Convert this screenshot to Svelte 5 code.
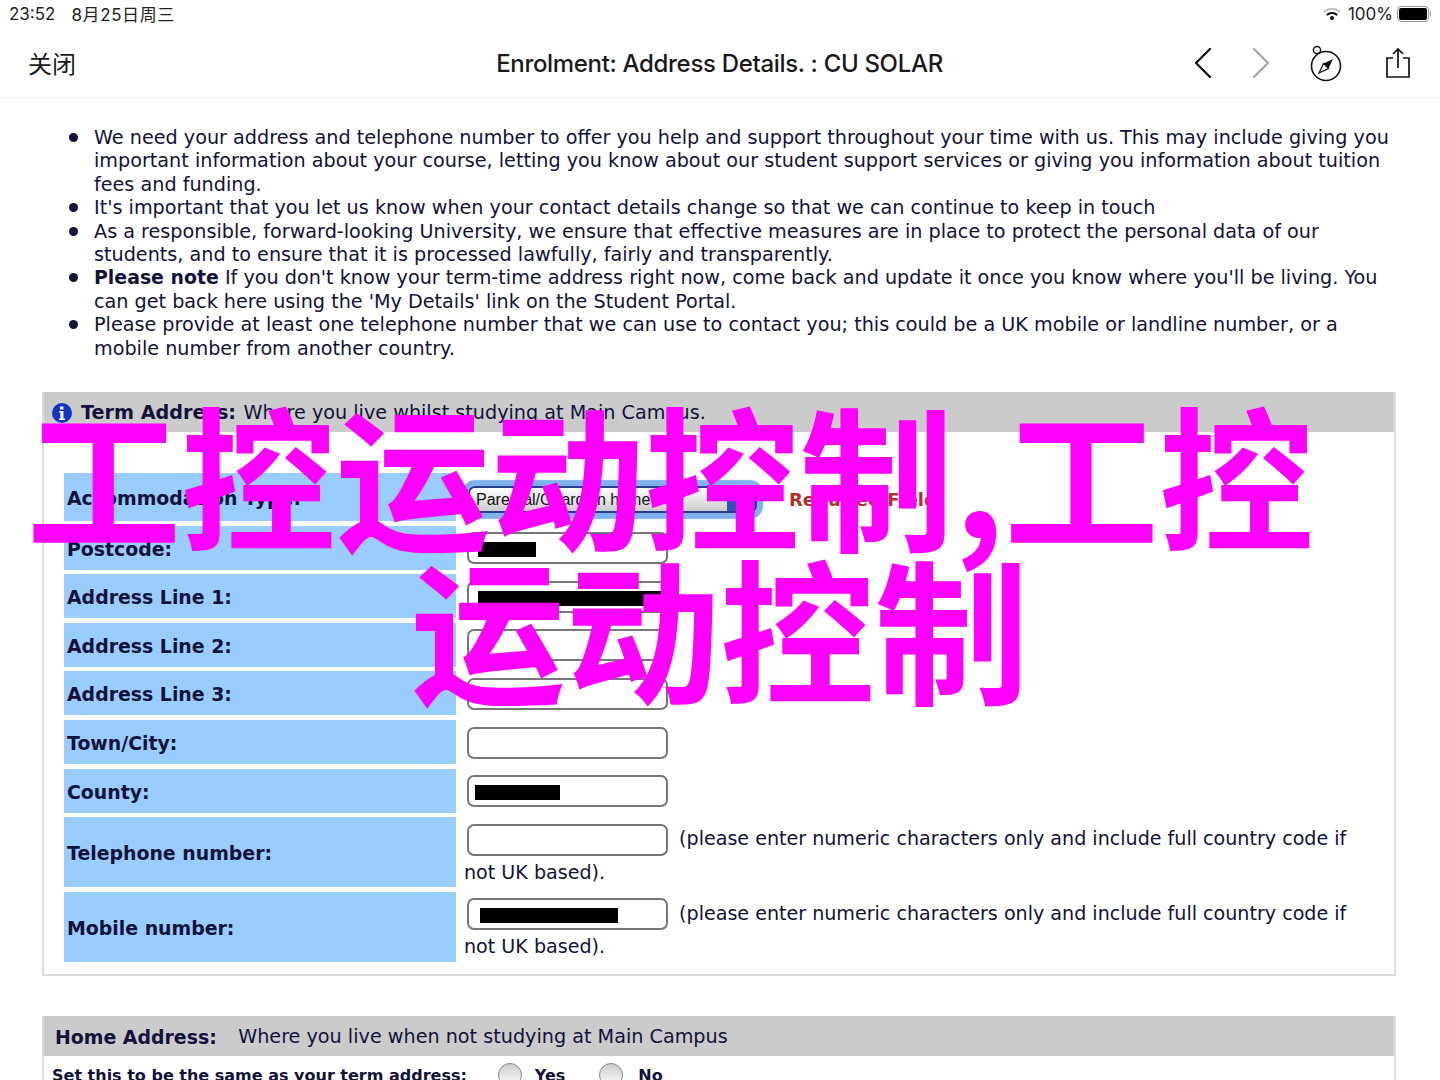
<script>
  const rows = [
    { label: 'Postcode:', mask: { left: 9, width: 58 } },
    { label: 'Address Line 1:', mask: { left: 9, width: 184 } },
    { label: 'Address Line 2:' },
    { label: 'Address Line 3:' },
    { label: 'Town/City:' },
    { label: 'County:', mask: { left: 6, width: 85 } }
  ];
  const notes = [
    { label: 'Telephone number:' },
    { label: 'Mobile number:', mask: { left: 11, width: 138 } }
  ];
</script>

<div class="screen">
  <header class="status">
    <span class="clock">23:52</span>
    <span class="date">8月25日周三</span>
    <span class="status-right">
      <svg class="wifi" width="20" height="14" viewBox="0 0 20 14">
        <path d="M2 5.2a11.5 11.5 0 0 1 16 0" fill="none" stroke="#bbb" stroke-width="1.8" />
        <path d="M4.8 8a7.5 7.5 0 0 1 10.4 0" fill="none" stroke="#111" stroke-width="2" />
        <circle cx="10" cy="11" r="2" fill="#111" />
      </svg>
      <span>100%</span>
      <span class="battery"><span class="battery-fill"></span></span>
      <span class="battery-cap"></span>
    </span>
  </header>

  <nav class="nav">
    <span class="close">关闭</span>
    <span class="title">Enrolment: Address Details. : CU SOLAR</span>
    <span class="tools">
      <svg width="20" height="32" viewBox="0 0 20 32">
        <path d="M17 2 3 16l14 14" fill="none" stroke="#111" stroke-width="2.4" stroke-linecap="round" stroke-linejoin="round" />
      </svg>
      <svg class="next" width="20" height="32" viewBox="0 0 20 32">
        <path d="M3 2l14 14L3 30" fill="none" stroke="#aaa" stroke-width="2.4" stroke-linecap="round" stroke-linejoin="round" />
      </svg>
      <svg class="compass" width="34" height="38" viewBox="0 0 34 38">
        <circle cx="18" cy="22" r="14.5" fill="none" stroke="#111" stroke-width="1.6" />
        <circle cx="9" cy="6" r="3.6" fill="none" stroke="#111" stroke-width="1.5" />
        <path d="M25 15 20.5 24.5 15.5 19.5z" fill="#111" />
        <path d="M11 29l4.500-9.500 5 5z" fill="none" stroke="#111" stroke-width="1.2" />
      </svg>
      <svg class="share" width="26" height="32" viewBox="0 0 26 32">
        <path d="M8 11H2v19h22V11h-6" fill="none" stroke="#111" stroke-width="1.7" />
        <path d="M13 21V2M8 7l5-5 5 5" fill="none" stroke="#111" stroke-width="1.7" />
      </svg>
    </span>
  </nav>

  <main class="page">
    <ul class="notes">
      <li>We need your address and telephone number to offer you help and support throughout your time with us. This may include giving you important information about your course, letting you know about our student support services or giving you information about tuition fees and funding.</li>
      <li>It's important that you let us know when your contact details change so that we can continue to keep in touch</li>
      <li>As a responsible, forward-looking University, we ensure that effective measures are in place to protect the personal data of our students, and to ensure that it is processed lawfully, fairly and transparently.</li>
      <li><b>Please note</b> If you don't know your term-time address right now, come back and update it once you know where you'll be living. You can get back here using the 'My Details' link on the Student Portal.</li>
      <li>Please provide at least one telephone number that we can use to contact you; this could be a UK mobile or landline number, or a mobile number from another country.</li>
    </ul>

    <section class="panel term">
      <div class="panel-head">
        <svg class="info" width="20" height="20" viewBox="0 0 20 20">
          <circle cx="10" cy="10" r="10" fill="#1533c8" />
          <path d="M8 3.500h3.400v3H8zM7 8h4.400v7.400H13V17H7v-1.600h1.400V9.600H7z" fill="#fff" />
        </svg>
        <b>Term Address:</b> Where you live whilst studying at Main Campus.
      </div>

      <div class="rows">
        <div class="row first">
          <div class="label">Accommodation Type:</div>
          <div class="value select-cell">
            <span class="select">Parental/Guardian home<span class="select-btn"></span></span>
            <span class="required">Required Field</span>
          </div>
        </div>
        {#each rows as row}
          <div class="row">
            <div class="label">{row.label}</div>
            <div class="value">
              <span class="field">
                {#if row.mask}<span class="mask" style="margin-left: {row.mask.left}px; width: {row.mask.width}px"></span>{/if}
              </span>
            </div>
          </div>
        {/each}
        {#each notes as row}
          <div class="row tall">
            <div class="label">{row.label}</div>
            <div class="value">
              <span class="field">
                {#if row.mask}<span class="mask" style="margin-left: {row.mask.left}px; width: {row.mask.width}px"></span>{/if}
              </span>
              (please enter numeric characters only and include full country code if not UK based).
            </div>
          </div>
        {/each}
      </div>
    </section>

    <section class="panel home">
      <div class="panel-head home-head">
        <b>Home Address:</b>
        <span>Where you live when not studying at Main Campus</span>
      </div>
      <div class="same">
        <b>Set this to be the same as your term address:</b>
        <span class="radio"></span><b>Yes</b>
        <span class="radio no"></span><b>No</b>
      </div>
    </section>
  </main>

  <div class="stamp">
    <span class="stamp-one">工控运动控制,工控</span>
    <span class="stamp-two">运动控制</span>
  </div>
</div>

<style>
  :global(body) {
    margin: 0;
    background: #fff;
  }

  .screen {
    position: relative;
    width: 1440px;
    height: 1080px;
    overflow: hidden;
    background: #fff;
    color: #12123a;
    font-family: "DejaVu Sans", sans-serif;
  }

  .status {
    display: flex;
    align-items: center;
    box-sizing: border-box;
    height: 26px;
    padding: 1px 9px 0 9px;
    font-family: Inter, "Noto Sans CJK SC", sans-serif;
    font-size: 17px;
    color: #222;
  }

  .date {
    margin-left: 16px;
    letter-spacing: 0.6px;
  }

  .status-right {
    display: flex;
    align-items: center;
    margin-left: auto;
    font-size: 17px;
  }

  .wifi {
    margin-right: 6px;
  }

  .battery {
    display: flex;
    width: 28px;
    height: 12px;
    margin-left: 4px;
    padding: 1px;
    border: 1px solid #999;
    border-radius: 4px;
  }

  .battery-fill {
    flex: 1;
    background: #000;
    border-radius: 2px;
  }

  .battery-cap {
    width: 1px;
    height: 5px;
    margin-left: 1px;
    background: #999;
  }

  .nav {
    display: grid;
    grid-template-columns: 1fr auto 1fr;
    align-items: center;
    height: 72px;
    padding: 2px 29px 0 28px;
    border-bottom: 1px solid #f0f0f0;
    box-sizing: border-box;
    color: #1a1a1a;
  }

  .close {
    font-family: "Noto Sans CJK SC", sans-serif;
    font-size: 24px;
  }

  .title {
    margin-top: 1px;
    font-family: Inter, sans-serif;
    font-size: 24px;
    font-weight: 500;
    letter-spacing: -0.32px;
    white-space: nowrap;
  }

  .tools {
    display: flex;
    align-items: center;
    justify-self: end;
  }

  .next {
    margin-left: 38px;
  }

  .compass {
    margin-left: 37px;
  }

  .share {
    margin-left: 43px;
  }

  .page {
    padding: 28px 44px 0 42px;
    font-size: 19.2px;
  }

  .notes {
    margin: 0 0 32px;
    padding: 0 0 0 52px;
    font-size: 19.2px;
    line-height: 23.4px;
    list-style: none;
  }

  .notes li {
    position: relative;
  }

  .notes li::before {
    content: "";
    position: absolute;
    top: 7px;
    left: -25px;
    width: 9px;
    height: 9px;
    border-radius: 50%;
    background: #12123a;
  }

  .notes b {
    font-size: 18.9px;
  }

  .panel {
    box-sizing: border-box;
    border: 1px solid #dcdcdc;
    border-top: 0;
  }

  .term {
    height: 584px;
    border-width: 0 2px 2px;
  }

  .panel-head {
    display: flex;
    align-items: center;
    box-sizing: border-box;
    height: 40px;
    padding: 1px 0 0 8px;
    background: #cbcbcb;
    font-size: 19.2px;
    white-space: pre;
  }

  .panel-head b {
    margin-right: 1.500px;
    font-size: 19.2px;
  }

  .info {
    margin-right: 9px;
  }

  .rows {
    display: flex;
    flex-direction: column;
    gap: 4.6px;
    padding: 41px 0 0 20px;
  }

  .row {
    display: flex;
    min-height: 44px;
  }

  .row.first {
    min-height: 48px;
  }

  .row.tall {
    height: 70px;
  }

  .label {
    display: flex;
    align-items: center;
    flex: none;
    box-sizing: border-box;
    width: 392px;
    padding: 2px 0 0 3px;
    background: #99ccff;
    font-size: 18.9px;
    font-weight: bold;
  }

  .value {
    flex: 1;
    padding: 5px 20px 0 8px;
    font-size: 19.1px;
    line-height: 33px;
  }

  .select-cell {
    display: flex;
    align-items: center;
  }

  .select {
    display: flex;
    align-items: center;
    box-sizing: border-box;
    width: 289px;
    height: 27px;
    margin-left: 4px;
    padding-left: 6px;
    border: 2px solid #233f8e;
    border-radius: 7px;
    box-shadow: 0 0 1px 6px #7fb2ea;
    background: linear-gradient(#fff, #ccc);
    font-family: "Liberation Sans", sans-serif;
    font-size: 16px;
    color: #111;
    overflow: hidden;
  }

  .select-btn {
    align-self: stretch;
    width: 28px;
    margin-left: auto;
    background: #2f55b0;
  }

  .required {
    margin-left: 32px;
    color: #b5302a;
    font-size: 18px;
    font-weight: bold;
  }

  .field {
    display: inline-flex;
    align-items: center;
    box-sizing: border-box;
    width: 201px;
    height: 32px;
    margin-left: 3px;
    margin-right: 5px;
    border: 2px solid #777;
    border-radius: 7px;
    background: #fff;
    vertical-align: middle;
  }

  .mask {
    height: 15px;
    margin-top: 3px;
    background: #000;
  }

  .home {
    margin-top: 40px;
    border-width: 0 2px;
  }

  .home-head {
    gap: 20px;
    padding-left: 11px;
  }

  .home-head b {
    font-size: 18.9px;
  }

  .same {
    display: flex;
    align-items: center;
    padding: 7px 0 0 8px;
    font-size: 16px;
    white-space: nowrap;
  }

  .radio {
    box-sizing: border-box;
    width: 24px;
    height: 24px;
    margin: 0 13px 0 31px;
    border: 1px solid #888;
    border-radius: 50%;
    background: linear-gradient(#ccc, #fff);
  }

  .radio.no {
    margin-left: 34px;
    margin-right: 15px;
  }

  /* watermark sits over the page */
  .stamp {
    position: absolute;
    top: 396px;
    left: 0;
    width: 1340px;
    display: flex;
    flex-direction: column;
    align-items: center;
    font-family: "Noto Sans CJK SC", sans-serif;
    font-size: 154.600px;
    font-weight: 700;
    line-height: 153px;
    color: #ff00ff;
  }

  .stamp-two {
    margin-left: 100px;
  }
</style>
